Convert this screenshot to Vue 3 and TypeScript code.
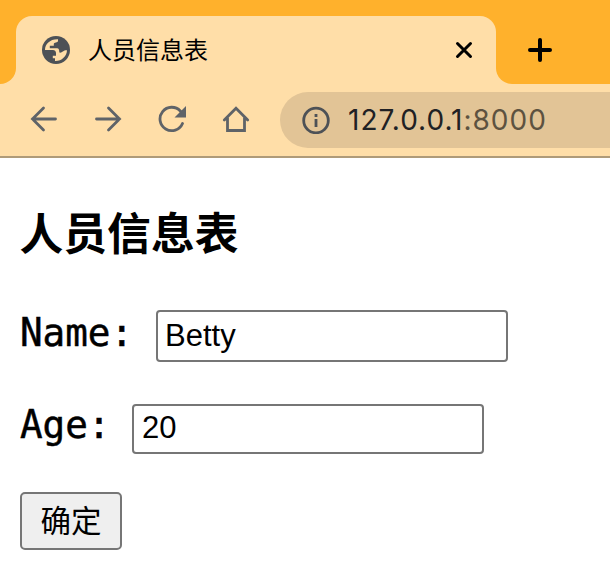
<script setup lang="ts">
import { ref } from 'vue'

const title = '人员信息表'
const name = ref<string>('Betty')
const age = ref<string>('20')
</script>

<template>
  <div class="window">
    <header class="tabs">
      <div class="side left"></div>
      <div class="tab-slot">
        <div class="tab">
          <svg class="globe" viewBox="0 0 28 28">
            <circle cx="14" cy="14" r="14" fill="#4d5156" />
            <path d="M3 13.900C3 8 8 2.900 16 3.200V5C16 7 11.800 5.800 11.800 8.300V9.800H7.800V12.300H15C17 12.300 17.300 14 17.300 16.500C20.500 17.300 20.500 14.200 25 14.300C24.800 20.500 19.500 25.300 13 25V22.300H10.800V19.800H14V17C14 15 12.500 13.900 11 13.900Z" fill="#ffdea8" />
          </svg>
          <span class="tab-title">{{ title }}</span>
          <svg class="close" viewBox="0 0 18 18"><path d="M2.500 2.500l13 13m0-13l-13 13" /></svg>
        </div>
      </div>
      <div class="side right">
        <svg class="plus" viewBox="0 0 24 24"><path d="M12 2v20M2 12h20" /></svg>
      </div>
    </header>
    <nav class="toolbar">
      <svg class="nav" viewBox="0 0 28 28"><path d="M25.500 14H2.500M13.500 3L2.500 14l11 11" /></svg>
      <svg class="nav" viewBox="0 0 28 28"><path d="M2.500 14h23M14.500 3l11 11-11 11" /></svg>
      <svg class="nav" viewBox="0 0 28 28">
        <path d="M24.500 18.500A11.700 11.700 0 1 1 22.300 6l1.700 2" />
        <path d="M28 1v11.500H16.500Z" class="solid" />
      </svg>
      <svg class="nav" viewBox="0 0 28 28"><path d="M2.300 15L14 3.300 25.700 15M5.500 13v12.500h17V13" /></svg>
      <div class="address">
        <svg class="info" viewBox="0 0 28 28">
          <circle cx="14" cy="14.500" r="12.300" />
          <path d="M14 13v8M14 8v3" />
        </svg>
        <span>127.0.0.1<span class="port">:8000</span></span>
      </div>
    </nav>
    <main class="page">
      <h1>{{ title }}</h1>
      <form @submit.prevent>
        <div class="row name-row">
          <label for="name">Name:</label>
          <input id="name" v-model="name" type="text" />
        </div>
        <div class="row age-row">
          <label for="age">Age:</label>
          <input id="age" v-model="age" type="text" />
        </div>
        <button type="submit">确定</button>
      </form>
    </main>
  </div>
</template>

<style>
body {
  background: #fff;
}
</style>

<style scoped>
.window {
  width: 610px;
  height: 580px;
  overflow: hidden;
  background: #fff;
  color: #000;
}
svg {
  display: block;
  flex: none;
}
.tabs {
  display: flex;
  height: 84px;
  background: #ffdea8;
}
.side {
  background: #ffb12c;
}
.left {
  width: 16px;
  border-bottom-right-radius: 16px;
}
.right {
  flex: 1;
  border-bottom-left-radius: 16px;
  padding: 38px 0 0 32px;
}
.tab-slot {
  width: 480px;
  padding-top: 16px;
  box-sizing: border-box;
  background: linear-gradient(#ffb12c 40px, #ffdea8 40px);
}
.tab {
  display: flex;
  align-items: center;
  box-sizing: border-box;
  height: 68px;
  padding: 0 23px 0 26px;
  border-radius: 16px 16px 0 0;
  background: #ffdea8;
}
.globe {
  width: 28px;
  height: 28px;
}
.tab-title {
  margin: -3px 0 0 18px;
  font: 24px/32px "Noto Sans CJK SC", sans-serif;
}
.close {
  width: 18px;
  height: 18px;
  margin-left: auto;
  fill: none;
  stroke: #000;
  stroke-width: 3;
  stroke-linecap: round;
}
.plus {
  width: 24px;
  height: 24px;
  fill: none;
  stroke: #000;
  stroke-width: 4;
  stroke-linecap: round;
}
.toolbar {
  display: flex;
  align-items: center;
  gap: 36px;
  box-sizing: border-box;
  height: 74px;
  padding-left: 30px;
  background: #ffdea8;
  border-bottom: 2px solid #af9b79;
}
.nav {
  width: 28px;
  height: 28px;
  margin-top: -2px;
  fill: none;
  stroke: #5f6368;
  stroke-width: 2.800;
  stroke-linecap: round;
}
.nav .solid {
  fill: #5f6368;
  stroke: none;
}
.address {
  display: flex;
  flex: 1;
  align-items: center;
  height: 56px;
  margin-left: -6px;
  padding-left: 22px;
  border-radius: 28px 0 0 28px;
  background: #e2c496;
  color: #202124;
  font: 28px/56px Inter, sans-serif;
  letter-spacing: 1px;
}
.info {
  width: 28px;
  height: 28px;
  margin-right: 18px;
  fill: none;
  stroke: #4d5156;
  stroke-width: 2.800;
}
.port {
  color: #5d5240;
}
.page {
  padding: 41px 20px 0;
}
h1 {
  margin: 0 0 0 -0.500px;
  font: 700 43.800px/64px "Noto Sans CJK SC", sans-serif;
}
.row {
  display: flex;
  align-items: center;
}
.name-row {
  height: 52px;
  margin-top: 47px;
}
.age-row {
  height: 50px;
  margin-top: 42px;
}
label {
  padding-bottom: 6px;
  font: 37.600px/46px "DejaVu Sans Mono", monospace;
  transform: scaleY(1.040);
  transform-origin: 50% 80%;
  -webkit-text-stroke: 0.500px #000;
}
.name-row label {
  width: 136px;
}
.age-row label {
  width: 112px;
  padding-bottom: 8px;
}
input {
  box-sizing: border-box;
  width: 352px;
  height: 100%;
  margin: 0;
  padding: 0 7px;
  border: 2px solid #767676;
  border-radius: 4px;
  outline: none;
  background: #fff;
  color: #000;
  font: 31px/36px "Liberation Sans", sans-serif;
}
.age-row input {
  padding: 0 8px 2px;
}
button {
  display: block;
  box-sizing: border-box;
  width: 102px;
  height: 58px;
  margin: 38px 0 0;
  padding: 0 0 4px;
  border: 2px solid #767676;
  border-radius: 5px;
  background: #efefef;
  color: #000;
  font: 30.500px/50px "Noto Sans CJK SC", sans-serif;
}
</style>
